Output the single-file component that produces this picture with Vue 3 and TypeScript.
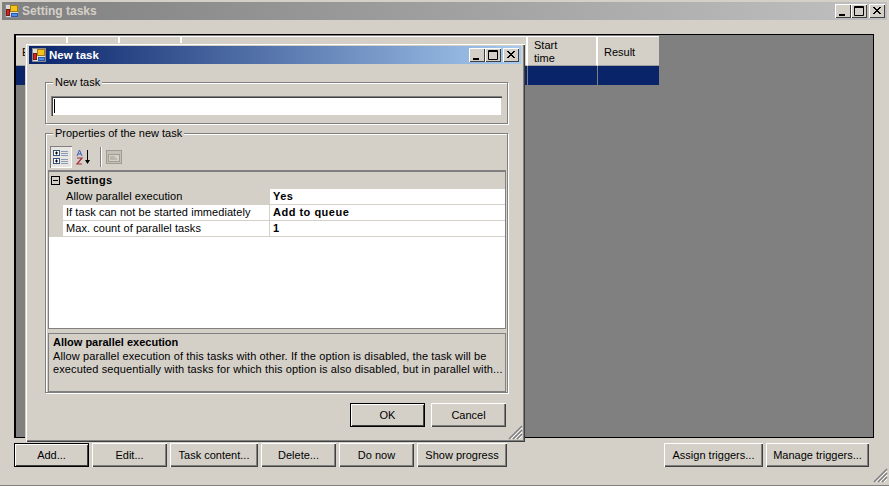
<script setup lang="ts">
interface Btn { label: string; w: number; isDefault?: boolean }
const left: Btn[] = [
  { label: 'Add...', w: 75, isDefault: true },
  { label: 'Edit...', w: 75 },
  { label: 'Task content...', w: 88 },
  { label: 'Delete...', w: 75 },
  { label: 'Do now', w: 75 },
  { label: 'Show progress', w: 90 },
]
const right: Btn[] = [
  { label: 'Assign triggers...', w: 99 },
  { label: 'Manage triggers...', w: 103 },
]
const props = [
  { k: 'Allow parallel execution', v: 'Yes', selected: true },
  { k: 'If task can not be started immediately', v: 'Add to queue', selected: false },
  { k: 'Max. count of parallel tasks', v: '1', selected: false },
]
const headerCols = [
  { w: 52, t: 'E' }, { w: 52, t: '' }, { w: 62, t: '' }, { w: 346, t: '' },
  { w: 70, t: 'Start time' }, { w: 61, t: 'Result' },
]
</script>

<template>
  <div class="win main">
    <div class="title inactive">
      <svg class="icon" width="14" height="14" viewBox="0 0 14 14"><rect x=".5" y=".5" width="13" height="13" fill="#d8d8d8" stroke="#8a8a90"/><rect x="5.500" y="1.500" width="7" height="6" fill="#f6c21c" stroke="#a67c10"/><rect x="1.500" y="5.500" width="3" height="6" fill="#d8231c" stroke="#7a1a14"/><rect x="6.500" y="9.500" width="6" height="3" fill="#4a8ee8" stroke="#2a5aa8"/></svg>
      <span class="title-text">Setting tasks</span>
      <div class="caps">
        <span class="cap"><svg width="16" height="14" viewBox="0 0 16 14"><rect x="4" y="10" width="6" height="2" fill="#000"/></svg></span>
        <span class="cap"><svg width="16" height="14" viewBox="0 0 16 14"><path d="M3.5 2.5h9v9h-9z M3 3.500h10" fill="none" stroke="#000"/></svg></span>
        <span class="cap cap-close"><svg width="16" height="14" viewBox="0 0 16 14"><path d="M4 3l7 7M5 3l7 7M11 3l-7 7M12 3l-7 7" stroke="#000" fill="none"/></svg></span>
      </div>
    </div>

    <div class="grid">
      <div class="grid-head">
        <div v-for="(c, i) in headerCols" :key="i" class="hcell" :style="{ width: c.w + 'px' }"><span class="hlabel">{{ c.t }}</span></div>
      </div>
      <div class="grid-row">
        <div v-for="(c, i) in headerCols" :key="i" class="rcell" :style="{ width: c.w + 'px' }"></div>
      </div>
    </div>

    <div class="bottom">
      <div class="btn-group">
        <button v-for="b in left" :key="b.label" class="btn" :class="{ def: b.isDefault }" :style="{ width: b.w + 'px' }">{{ b.label }}</button>
      </div>
      <div class="btn-group">
        <button v-for="b in right" :key="b.label" class="btn" :style="{ width: b.w + 'px' }">{{ b.label }}</button>
      </div>
    </div>
    <svg class="grip main-grip" width="15" height="15" viewBox="0 0 15 15"><path d="M14 1L1 14M14 5L5 14M14 9L9 14" stroke="#808080" stroke-width="1.500"/><path d="M14 3L3 14M14 7L7 14M14 11L11 14" stroke="#fff"/></svg>

    <div class="win dialog">
      <div class="title active">
        <svg class="icon" width="14" height="14" viewBox="0 0 14 14"><rect x=".5" y=".5" width="13" height="13" fill="#e0e0e0" stroke="#8a8a90"/><rect x="5.500" y="1.500" width="7" height="6" fill="#f6c21c" stroke="#a67c10"/><rect x="1.500" y="5.500" width="3" height="6" fill="#d8231c" stroke="#7a1a14"/><rect x="6.500" y="9.500" width="6" height="3" fill="#4a8ee8" stroke="#2a5aa8"/></svg>
        <span class="title-text">New task</span>
        <div class="caps">
          <span class="cap"><svg width="16" height="14" viewBox="0 0 16 14"><rect x="4" y="10" width="6" height="2" fill="#000"/></svg></span>
          <span class="cap"><svg width="16" height="14" viewBox="0 0 16 14"><path d="M3.5 2.5h9v9h-9z M3 3.500h10" fill="none" stroke="#000"/></svg></span>
          <span class="cap cap-close"><svg width="16" height="14" viewBox="0 0 16 14"><path d="M4 3l7 7M5 3l7 7M11 3l-7 7M12 3l-7 7" stroke="#000" fill="none"/></svg></span>
        </div>
      </div>

      <div class="dialog-body">
        <fieldset class="group g1">
          <legend>New task</legend>
          <div class="textbox"><span class="caret"></span></div>
        </fieldset>

        <fieldset class="group g2">
          <legend>Properties of the new task</legend>
          <div class="toolbar">
            <span class="tool on">
              <svg width="18" height="18" viewBox="0 0 18 18"><rect x="1.500" y="2.500" width="6" height="5" fill="#fff" stroke="#35507a"/><path d="M3 5h3M4.500 3.500v3" stroke="#000"/><rect x="1.500" y="10.500" width="6" height="5" fill="#fff" stroke="#35507a"/><path d="M3 13h3M4.500 11.500v3" stroke="#000"/><path d="M9 3.500h7M9 5.500h7M9 7.500h7M9 11.500h7M9 13.500h7M9 15.500h7" stroke="#8a9ab8"/></svg>
            </span>
            <span class="tool">
              <svg width="18" height="18" viewBox="0 0 18 18"><path d="M2 8l2.500-6L7 8M3 6h3" stroke="#3a5fc0" fill="none"/><path d="M2 10h5L2 16h5" stroke="#a03040" fill="none" stroke-width="1.200"/><path d="M12.500 2v13" stroke="#000"/><path d="M10 12h5l-2.500 4z" fill="#000"/></svg>
            </span>
            <span class="tool-sep"></span>
            <span class="tool">
              <svg width="18" height="18" viewBox="0 0 18 18"><rect x="1.500" y="2.500" width="15" height="13" fill="#c4c0b8" stroke="#a09c94"/><rect x="3.500" y="6.500" width="11" height="7" fill="#d4d0c8" stroke="#a09c94"/><path d="M5 9h5M5 11h7" stroke="#a09c94"/></svg>
            </span>
          </div>

          <div class="pgrid">
            <div class="cat">
              <span class="expander"></span>
              <span class="cat-label">Settings</span>
            </div>
            <div v-for="p in props" :key="p.k" class="prow">
              <span class="gutter"></span>
              <span class="pkey" :class="{ sel: p.selected }">{{ p.k }}</span>
              <span class="pval">{{ p.v }}</span>
            </div>
          </div>

          <div class="help">
            <div class="help-title">Allow parallel execution</div>
            <div class="help-text">Allow parallel execution of this tasks with other. If the option is disabled, the task will be</div>
            <div class="help-text">executed sequentially with tasks for which this option is also disabled, but in parallel with...</div>
          </div>
        </fieldset>

        <div class="dlg-actions">
          <button class="btn def">OK</button>
          <button class="btn">Cancel</button>
        </div>
      </div>
      <svg class="grip dlg-grip" width="15" height="15" viewBox="0 0 15 15"><path d="M14 1L1 14M14 5L5 14M14 9L9 14" stroke="#808080" stroke-width="1.500"/><path d="M14 3L3 14M14 7L7 14M14 11L11 14" stroke="#fff"/></svg>
    </div>
  </div>
</template>

<style>
html, body { margin: 0; padding: 0; background: #d4d0c8; }
</style>

<style scoped>
* { box-sizing: border-box; }
.win {
  background: #d4d0c8;
  font: 11px/13px "Liberation Sans", Arial, sans-serif;
  color: #000;
}
.main {
  position: relative;
  width: 889px;
  height: 486px;
  padding: 2px 2px 0;
  border-bottom: 1px solid #808080;
  display: flex;
  flex-direction: column;
  overflow: hidden;
}
.title {
  height: 18px;
  display: flex;
  align-items: center;
  padding-left: 3px;
  flex: none;
}
.inactive { background: linear-gradient(90deg, #808080, #c0c0c0); color: #d4d0c8; }
.active { background: linear-gradient(90deg, #0a246a, #a6caf0); color: #fff; }
.title-text { font-weight: 700; margin-left: 3px; font-size: 11.5px; }
.inactive .title-text { font-size: 12px; }
.icon { flex: none; }
.caps { margin-left: auto; display: flex; margin-right: 2px; }
.cap {
  width: 16px;
  height: 14px;
  background: #d4d0c8;
  box-shadow: inset 1px 1px 0 #fff, inset -1px -1px 0 #404040;
  display: block;
}
.cap svg { display: block; }
.cap-close { margin-left: 2px; }
.grid {
  margin: 14px 13px 0 12px;
  height: 404px;
  flex: none;
  background: #808080;
  border-top: 1px solid #000;
  border-left: 2px solid #000;
  border-right: 1px solid #000;
  border-bottom: 1px solid #000;
  display: flex;
  flex-direction: column;
}
.grid-head {
  display: flex;
  height: 30px;
  margin-top: 1px;
}
.hcell {
  flex: none;
  background: #d4d0c8;
  border-top: 1px solid #fff;
  border-right: 2px solid #fff;
  border-bottom: 1px solid #a0a0a0;
  padding: 2px 4px 0 6px;
  display: flex;
  align-items: center;
}
.hlabel { display: block; max-width: 36px; }
.hcell:last-child { border-right: 0; }
.grid-row { display: flex; height: 19px; }
.rcell {
  flex: none;
  background: #0a246a;
  border-right: 1px solid #808080;
}
.rcell:last-child { border-right: 0; }
.bottom {
  margin: 5px 18px 0 12px;
  display: flex;
  justify-content: space-between;
  flex: none;
}
.btn-group { display: flex; gap: 3px; }
.btn {
  height: 24px;
  padding: 0;
  border: 0;
  background: #d4d0c8;
  font: inherit;
  color: #000;
  box-shadow: inset 1px 1px 0 #fff, inset -1px -1px 0 #404040, inset -2px -2px 0 #808080;
}
.btn.def {
  box-shadow: inset 0 0 0 1px #000, inset 2px 2px 0 #fff, inset -2px -2px 0 #404040;
}
.grip { position: absolute; }
.main-grip { right: 1px; bottom: 2px; }
.dialog {
  position: absolute;
  left: 25px;
  top: 43px;
  width: 500px;
  height: 399px;
  padding: 3px 3px 0 4px;
  box-shadow: inset 1px 1px 0 #d4d0c8, inset 2px 2px 0 #fff, inset -1px -1px 0 #404040, inset -2px -2px 0 #808080;
  display: flex;
  flex-direction: column;
}
.dialog .title { height: 18px; margin-right: 1px; }
.dialog .title-text { font-size: 11.5px; }
.dialog-body {
  padding: 12px 12px 0 16px;
  display: flex;
  flex-direction: column;
  flex: 1;
  min-height: 0;
}
.group {
  margin: 0;
  padding: 0;
  min-width: 0;
  border: 1px solid #808080;
  box-shadow: 1px 1px 0 #fff, inset 1px 1px 0 #fff;
  position: relative;
}
.group legend {
  position: absolute;
  left: 7px;
  top: -7px;
  background: #d4d0c8;
  padding: 0 2px;
  line-height: 13px;
}
.g1 { height: 42px; padding: 13px 5px 0; margin-top: 6px; width: 463px; }
.textbox {
  height: 20px;
  background: #fff;
  box-shadow: inset 1px 1px 0 #808080, inset 2px 2px 0 #404040, inset -1px -1px 0 #d4d0c8;
  padding: 3px 0 0 3px;
}
.caret { display: block; width: 1px; height: 14px; background: #000; }
.g2 { height: 260px; margin-top: 9px; padding: 12px 1px 0 2px; width: 463px; }
.toolbar {
  height: 24px;
  display: flex;
  align-items: center;
  gap: 1px;
  padding: 0 0 2px 2px;
}
.tool { width: 22px; height: 22px; display: flex; align-items: center; justify-content: center; }
.tool.on { background: #e8e6e0; box-shadow: inset 1px 1px 0 #808080, inset -1px -1px 0 #fff; }
.tool-sep { width: 1px; height: 20px; background: #808080; margin: 0 1px 0 4px; box-shadow: 1px 0 0 #fff; }
.pgrid {
  margin-top: 0;
  height: 159px;
  background: #fff;
  border: 1px solid #808080;
  border-top-width: 2px;
}
.cat {
  height: 17px;
  background: #d4d0c8;
  display: flex;
  align-items: center;
  padding-left: 2px;
}
.expander {
  width: 9px;
  height: 9px;
  border: 1px solid #000;
  background: linear-gradient(#000, #000) center / 5px 1px no-repeat #d4d0c8;
  margin-right: 6px;
  flex: none;
}
.cat-label { font-weight: 700; letter-spacing: .4px; }
.prow {
  height: 16px;
  display: flex;
  border-bottom: 1px solid #d4d0c8;
  background: #fff;
  line-height: 15px;
}
.gutter { width: 14px; background: #d4d0c8; flex: none; }
.pkey {
  width: 207px;
  padding-left: 3px;
  border-right: 1px solid #d4d0c8;
  flex: none;
  white-space: nowrap;
  letter-spacing: .06px;
}
.pkey.sel { background: #d4d0c8; }
.pval { font-weight: 700; padding-left: 3px; letter-spacing: .5px; }
.help {
  margin-top: 4px;
  height: 59px;
  border: 1px solid #808080;
  padding: 2px 4px;
  line-height: 13px;
}
.help-title { font-weight: 700; margin-bottom: 1px; }
.help-text { letter-spacing: .11px; white-space: nowrap; }
.dlg-actions {
  margin-top: 10px;
  display: flex;
  justify-content: flex-end;
  gap: 6px;
  width: 463px;
  padding-right: 2px;
}
.dlg-actions .btn { width: 75px; }
.dlg-grip { right: 2px; bottom: 2px; }
</style>
